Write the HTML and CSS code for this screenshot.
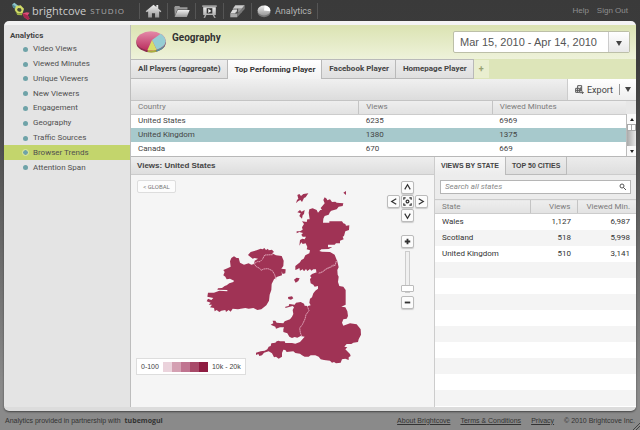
FILE: index.html
```html
<!DOCTYPE html>
<html lang="en">
<head>
<meta charset="utf-8">
<title>Brightcove Studio - Analytics</title>
<link rel="stylesheet" href="styles.css">
</head>
<body>
<header class="topbar">
  <a class="brand" href="#">
    <svg class="brand-mark" viewBox="0 0 60 54" aria-hidden="true">
      <path fill="#8cc4cc" d="M4 7l6-5 10 8 3 8-8 4-9-6z"/>
      <path fill="#548c97" d="M4 7l10 6 1 9-9-6z"/>
      <path fill="#d2dc68" d="M15 12l14-2 10 10-4 13-15 2-9-11z"/>
      <path fill="#454b38" d="M21 18l8 1 3 6-4 5-7-2-3-5z"/>
      <path fill="#9fb544" d="M11 24l9 11 15-2-2 7-14-1z"/>
      <path fill="#e04c78" d="M35 34l12-3 9 1-6 8 6 10-6 3-11-8z"/>
      <path fill="#a72850" d="M35 34l15 6 6 10-6 3-11-8z"/>
    </svg>
    <span class="brand-name">brightcove</span><span class="brand-sub">STUDIO</span>
  </a>
  <nav class="modules" aria-label="Modules">
    <a href="#" aria-label="Home"><svg viewBox="0 0 54 48"><path fill="url(#metal)" d="M2 25L27 4l9 7V5h6v11l10 9-3 3-4-3v20H32V31H22v14H10V25l-4 3z"/></svg></a>
    <a href="#" aria-label="Media"><svg viewBox="0 0 54 48"><path fill="#999" d="M4 12l3-4h13l3 4h23v7H14L6 40z"/><path fill="url(#metal)" d="M15 21h38l-9 22H5z"/></svg></a>
    <a href="#" aria-label="Publishing"><svg viewBox="0 0 54 48"><path fill="#aaa" d="M4 6h46v5H4z"/><path fill="url(#metal)" d="M7 12h40v25H7zM12 37h5l-4 9H8zM37 37h5l5 9h-5z"/><path fill="#333" d="M18 15h18v17H18z"/><path fill="#eee" d="M23 17l10 7-10 6z"/></svg></a>
    <a href="#" aria-label="Advertising"><svg viewBox="0 0 54 48"><path fill="#ccc" d="M20 6h30l-9 11H12z"/><path fill="#999" d="M12 17h29v11H12z"/><path fill="#777" d="M50 6v12L26 44V32l15-15z"/><path fill="#ddd" d="M11 21h15l-7 11H4z"/><path fill="#aaa" d="M4 32h22v12H4z"/><path fill="#444" d="M26 17h3v11h-3z"/></svg></a>
    <a class="current" href="#"><svg viewBox="0 0 48 48"><ellipse cx="24" cy="28" rx="22" ry="17" fill="#777"/><ellipse cx="24" cy="22" rx="22" ry="17" fill="url(#metal)"/><path fill="#fff" d="M24 22L26 5a22 17 0 0 1 19 20z"/></svg><span>Analytics</span></a>
  </nav>
  <nav class="account" aria-label="Account"><a href="#">Help</a><a href="#">Sign Out</a></nav>
</header>

<svg class="defs" aria-hidden="true"><defs>
  <linearGradient id="metal" x2="0" y2="1"><stop stop-color="#eee"/><stop offset="1" stop-color="#999"/></linearGradient>
  <linearGradient id="rose" x2="0" y2="1"><stop stop-color="#e48aa9"/><stop offset="1" stop-color="#b92c5c"/></linearGradient>
</defs></svg>

<div class="window">
  <aside class="sidebar">
    <h2>Analytics</h2>
    <ul>
      <li><a href="#">Video Views</a></li>
      <li><a href="#">Viewed Minutes</a></li>
      <li><a href="#">Unique Viewers</a></li>
      <li><a href="#">New Viewers</a></li>
      <li><a href="#">Engagement</a></li>
      <li><a href="#">Geography</a></li>
      <li><a href="#">Traffic Sources</a></li>
      <li class="selected"><a href="#">Browser Trends</a></li>
      <li><a href="#">Attention Span</a></li>
    </ul>
  </aside>

  <main class="content">
    <div class="banner">
      <svg class="pie" viewBox="0 0 90 66" aria-hidden="true">
        <ellipse cx="45" cy="35" rx="44" ry="29" fill="#8d2b51"/>
        <path fill="#56939c" d="M48 32L89 33Q88 54 62 62z"/>
        <path fill="#a7b03c" d="M48 34L62 62Q48 66 34 63z"/>
        <ellipse cx="45" cy="30" rx="44" ry="29" fill="url(#rose)"/>
        <path fill="#95cdd3" d="M48 27L74 8Q89 18 89 31 88 48 62 56z"/>
        <path fill="#d8de6b" d="M48 27L62 56Q48 60 34 58z"/>
      </svg>
      <h1>Geography</h1>
      <div class="date-picker">
        <span>Mar 15, 2010 - Apr 14, 2010</span>
        <button type="button" aria-label="Choose dates"><i class="caret"></i></button>
      </div>
    </div>

    <div class="player-tabs">
      <button type="button">All Players (aggregate)</button>
      <button type="button" class="active">Top Performing Player</button>
      <button type="button">Facebook Player</button>
      <button type="button">Homepage Player</button>
      <button type="button" class="add" aria-label="Add player">+</button>
    </div>

    <div class="toolbar">
      <button type="button" class="export">
        <svg viewBox="0 0 27 27" aria-hidden="true"><path fill="none" stroke="#555" stroke-width="3" d="M8 9V2h12v17M2 10h12v12H2zM2 16h12M8 10v12M17 7v12M14 23h11M21 19l4 4-4 3"/></svg>
        <span>Export</span>
      </button>
      <button type="button" class="more" aria-label="Export options"><i class="caret"></i></button>
    </div>

    <div class="countries">
      <table>
        <thead><tr><th class="c-country">Country</th><th class="c-views">Views</th><th>Viewed Minutes</th></tr></thead>
        <tbody>
          <tr><td>United States</td><td>6235</td><td>6969</td></tr>
          <tr class="selected"><td>United Kingdom</td><td>1380</td><td>1375</td></tr>
          <tr><td>Canada</td><td>670</td><td>669</td></tr>
        </tbody>
      </table>
      <div class="scroller">
        <button type="button" aria-label="Scroll up"><i class="caret up"></i></button>
        <div class="track"><i class="thumb"></i></div>
        <button type="button" aria-label="Scroll down"><i class="caret"></i></button>
      </div>
    </div>

    <div class="detail">
      <section class="map-panel">
        <h2>Views: United States</h2>
        <div class="map">
          <svg class="land" viewBox="0 0 540 570" role="img" aria-label="Map of the United Kingdom and Ireland">
            <g fill="#a03355">
              <path d="M288 70l3-10 4-4-3-11 6-3 5 6 7-6 15-2-8 12-5 2-6 12-5-6-7 4zM292 97l8-7 5 5 9-5-2 12-4 4-2 10-8-8 4-8zM430 38l8-5v12zM282 299l8-6 9 2-4 8-8 5zM264 351l12-2 4 6-7 4-8-2z"/>
              <path d="M370 60L374 52 380 56 382 61 390 58 396 66 406 65 410 68 430 70 428 78 416 80 410 88 394 92 390 96 386 104 374 108 370 116 369 128 388 128 388 124 426 124 430 130 436 132 438 137 448 136 447 150 436 154 432 168 428 170 431 178 420 182 420 190 408 190 404 194 384 194 384 202 397 201 386 207 364 208 358 213 366 215 390 216 404 224 411 242 402 258 380 268 362 280 354 282 349 276 348 268 340 268 334 272 330 267 322 273 318 267 312 274 308 268 300 272 298 264 292 268 286 270 286 258 300 247 304 240 311 236 316 226 328 220 330 211 320 208 322 201 317 190 308 192 304 187 298 197 300 180 307 176 314 178 318 170 308 170 304 164 309 159 298 156 290 160 290 154 300 154 308 149 306 142 312 132 306 124 320 126 322 118 329 118 326 98 328 88 338 85 350 90 354 98 361 90 366 90 362 84 374 70z"/>
              <path d="M411 240L416 262 412 270 413 284 416 290 414 306 418 318 430 320 437 330 437 374 424 380 436 382 442 394 444 408 440 416 430 418 426 428 430 437 450 430 470 433 482 448 483 464 476 478 474 486 460 488 454 492 440 492 433 500 442 502 436 508 450 522 452 528 446 532 446 540 436 536 426 538 422 548 408 550 402 546 396 548 390 542 372 540 362 538 356 530 346 526 332 526 326 530 314 530 306 526 300 521 286 519 280 514 260 516 256 510 250 509 246 519 246 530 236 536 228 530 222 532 216 520 206 514 192 518 186 526 178 528 175 522 168 525 168 518 182 514 194 512 202 508 206 500 212 498 214 490 226 488 230 484 236 482 240 484 254 484 256 489 276 489 286 491 300 486 308 477 314 470 302 468 292 473 284 471 276 474 268 470 262 460 250 456 250 448 252 442 240 442 228 446 226 440 212 434 220 430 218 422 226 422 230 428 250 430 254 424 270 418 276 410 280 402 278 390 282 382 278 378 256 384 256 380 266 378 268 372 284 374 288 368 302 366 312 371 314 377 324 378 332 376 328 368 330 356 336 352 340 340 346 332 354 326 354 318 344 320 340 314 332 310 330 298 334 292 330 288 336 282 350 277 362 280 380 268 402 258z"/>
              <path d="M144 225L152 216 170 211 182 206 188 208 193 204 198 210 204 206 206 211 216 209 222 216 216 220 228 226 245 228 251 242 250 258 244 266 257 268 256 280 248 282 245 274 246 286 232 290 222 298 215 312 214 330 209 344 207 362 199 376 184 388 172 390 160 384 146 386 136 384 122 386 114 388 98 386 92 395 86 390 78 396 76 390 64 392 58 396 50 390 44 394 42 384 30 382 36 374 26 374 32 368 20 364 24 356 34 360 40 354 22 350 24 338 42 338 58 332 82 334 82 330 52 329 54 325 66 324 74 318 80 316 88 310 100 306 102 302 90 296 80 298 76 290 70 286 74 276 70 270 84 264 92 260 90 244 94 234 102 229 110 234 116 234 120 248 132 254 146 250 154 254 162 252 164 242 174 236 164 234 158 236z"/>
            </g>
            <g fill="none" stroke="#dc9eb3" stroke-width="3" stroke-dasharray="5 1">
              <path d="M218 224l-24 1-6 12-8 8-8 0-10 6 7 9 10 5 4 6 8-4 13-1 13 6 7 12 4 14"/>
              <path d="M409 243l-4 14-6-2-8 6-12 5-11 9-13 5M322 378l5 14-9 12-3 13-8 17-8 10 2 14 4 11"/>
            </g>
          </svg>
          <button type="button" class="map-button global">&lt; GLOBAL</button>
          <div class="map-controls">
            <div class="pan">
              <button type="button" class="map-button n" aria-label="Pan up"><svg viewBox="0 0 12 12"><path d="M3 8l3-5 3 5"/></svg></button>
              <button type="button" class="map-button w" aria-label="Pan left"><svg viewBox="0 0 12 12"><path d="M9 3L4 6l5 3"/></svg></button>
              <button type="button" class="map-button m" aria-label="Fit"><svg viewBox="0 0 12 12"><path d="M2 4V2h2M8 2h2v2M10 8v2H8M4 10H2V8"/><circle cx="6" cy="6" r="1.5"/></svg></button>
              <button type="button" class="map-button e" aria-label="Pan right"><svg viewBox="0 0 12 12"><path d="M3 3l5 3-5 3"/></svg></button>
              <button type="button" class="map-button s" aria-label="Pan down"><svg viewBox="0 0 12 12"><path d="M3 4l3 5 3-5"/></svg></button>
            </div>
            <button type="button" class="map-button zoom" aria-label="Zoom in"><svg viewBox="0 0 12 12"><path d="M3 6h6M6 3v6"/></svg></button>
            <input class="zoom-level" type="range" min="0" max="10" value="0" aria-label="Zoom level">
            <button type="button" class="map-button zoom" aria-label="Zoom out"><svg viewBox="0 0 12 12"><path d="M3 6h6"/></svg></button>
          </div>
          <div class="legend"><span>0-100</span><div class="ramp"><i></i><i></i><i></i><i></i><i></i></div><span>10k - 20k</span></div>
        </div>
      </section>

      <section class="states">
        <div class="state-tabs">
          <button type="button" class="active">VIEWS BY STATE</button>
          <button type="button">TOP 50 CITIES</button>
        </div>
        <div class="search">
          <input type="text" placeholder="Search all states" aria-label="Search all states">
          <svg viewBox="0 0 24 24" aria-hidden="true"><circle cx="9" cy="9" r="6"/><path d="M13 13l8 8"/></svg>
        </div>
        <table>
          <thead><tr><th>State</th><th class="s-views">Views</th><th class="s-min">Viewed Min.</th></tr></thead>
          <tbody>
            <tr><td>Wales</td><td>1,127</td><td>6,987</td></tr>
            <tr><td>Scotland</td><td>518</td><td>5,998</td></tr>
            <tr><td>United Kingdom</td><td>510</td><td>3,141</td></tr>
          </tbody>
        </table>
        <div class="stripes"></div>
      </section>
    </div>
  </main>
</div>

<footer class="footer">
  <span>Analytics provided in partnership with</span><b>tubemogul</b>
  <nav aria-label="Footer"><a href="#">About Brightcove</a><a href="#">Terms &amp; Conditions</a><a href="#">Privacy</a></nav>
  <span>© 2010 Brightcove Inc.</span>
  <svg class="grip" viewBox="0 0 8 8" aria-hidden="true"><path d="M1 8l7-7M4 8l4-4"/></svg>
</footer>
</body>
</html>
```
FILE: styles.css
```css
* { box-sizing: border-box; }

body {
  margin: 0;
  min-height: 100vh;
  display: flex;
  flex-direction: column;
  font: 8px/12px Roboto, "Liberation Sans", Arial, sans-serif;
  color: #444;
  background: linear-gradient(#3a3a3a 0, #3c3c3c 15%, #8a8a8a 90%);
}

a { color: inherit; text-decoration: none; }
h1, h2, ul { margin: 0; padding: 0; }
ul { list-style: none; }
button, input { font: inherit; color: inherit; margin: 0; padding: 0; border: 0; background: none; }
svg { display: block; }
.defs { position: absolute; width: 0; height: 0; }

.caret {
  display: inline-block;
  border: 3px solid transparent;
  border-top: 5px solid #444;
  border-bottom: 0;
}
.caret.up { border-top: 0; border-bottom: 3px solid #222; }

/* Top bar */
.topbar { display: flex; align-items: center; height: 21px; padding: 0 12px 0 11px; color: #b4b4b4; }
.brand { display: flex; align-items: center; width: 128px; }
.brand-mark { width: 20px; height: 18px; margin-right: 1px; }
.brand-name { font: 11px/20px "Open Sans", sans-serif; color: #ccc; }
.brand-sub { margin-left: 4px; font: 8px/20px "Open Sans", sans-serif; letter-spacing: 1px; color: #aaa; }
.modules { display: flex; }
.modules a { display: flex; align-items: center; gap: 4px; height: 16px; padding: 0 5px; border-left: 1px solid #555; }
.modules a:last-child { border-right: 1px solid #555; }
.modules svg { width: 17px; height: 16px; }
.modules .current svg { width: 14px; height: 14px; }
.current span { font-size: 9px; line-height: 16px; }
.account { display: flex; gap: 8px; margin-left: auto; color: #8f8f8f; font-family: "Liberation Sans", sans-serif; }

/* Window */
.window {
  flex: 1;
  display: flex;
  margin: 0 4px;
  border-top: 4px solid #f4f4f4;
  border-bottom: 4px solid #dcdcdc;
  border-radius: 5px;
  background: #e4e4e4;
  box-shadow: 0 1px 2px #444;
}
.sidebar { width: 127px; padding-top: 5px; border-right: 1px solid #bdbdbd; }
.sidebar h2 { margin-left: 6px; font-size: 8px; line-height: 12px; }
.sidebar ul { display: grid; grid-auto-rows: 1fr; height: 133px; }
.sidebar li { display: flex; align-items: center; padding-left: 19px; color: #505050; }
.sidebar li::before {
  content: "";
  width: 5px;
  height: 5px;
  margin-right: 5px;
  border-radius: 50%;
  background: #6fa3a8;
}
.sidebar .selected { background: #c3d56c; }
.sidebar .selected::before { outline: 1px solid #dce8a8; }
.content { flex: 1; display: flex; flex-direction: column; min-width: 0; }

/* Banner */
.banner { display: flex; align-items: center; height: 34px; padding: 0 6px 0 5px; background: linear-gradient(#dbe3b2, #eef2da); }
.pie { width: 30px; height: 22px; }
.banner h1 { margin: 0 auto 8px 6px; font-size: 10px; line-height: 12px; color: #333; }
.date-picker { display: flex; height: 22px; border: 1px solid #bcbfa8; border-radius: 2px; background: #fff; font: 11px/20px "Liberation Sans", sans-serif; color: #555; }
.date-picker span { width: 154px; padding-left: 6px; }
.date-picker button { width: 21px; border-left: 1px solid #ccc; background: linear-gradient(#fff, #e8e8e8); }

/* Player tabs */
.player-tabs { display: flex; height: 20px; background: #dde5b9; }
.player-tabs button {
  padding: 0 6px 0 7px;
  border: solid #b9b9b9;
  border-width: 1px 1px 1px 0;
  background: linear-gradient(#ededed, #dfdfdf);
  font-weight: bold;
}
.player-tabs .active { border-bottom: 0; background: linear-gradient(#fff, #f2f2f2); color: #333; }
.player-tabs .add { padding: 0 5px; border-color: #dde5b9; background: #e9eecf; color: #98a273; font-size: 9px; }

.toolbar { display: flex; justify-content: flex-end; height: 22px; background: linear-gradient(#f0f0f0, #dcdcdc); border-bottom: 1px solid #c4c4c4; }
.toolbar button { background: linear-gradient(#fff, #eee); }
.toolbar .export { display: flex; align-items: center; gap: 3px; width: 52px; padding-left: 7px; border-left: 1px solid #ccc; font-size: 9px; }
.export svg { width: 9px; height: 9px; }
.more { width: 17px; position: relative; }
.more::before { content: ""; position: absolute; left: 0; top: 5px; bottom: 5px; border-left: 1px solid #999; }

/* Tables */
table { width: 100%; border-collapse: collapse; table-layout: fixed; }
th { font-weight: normal; text-align: left; color: #7c7c7c; background: linear-gradient(#eee, #e2e2e2); border-bottom: 1px solid #ccc; }
th + th { border-left: 1px solid #c4c4c4; }
th, td { padding: 0 7px; }

.countries { position: relative; padding-right: 10px; background: #e8e8e8; }
.countries th { height: 13px; line-height: 12px; }
.countries td { height: 14px; background: #fff; }
.countries .selected td { background: #a7c9cc; }
.c-country { width: 46%; }
.c-views { width: 27%; }
.scroller { position: absolute; right: 0; top: 13px; bottom: 0; width: 10px; display: flex; flex-direction: column; border-left: 1px solid #bbb; background: #ddd; }
.scroller button { display: flex; align-items: center; justify-content: center; height: 10px; background: #fafafa; }
.scroller .caret { border-width: 3px 2px 0; border-top-color: #222; }
.scroller .caret.up { border-width: 0 2px 3px; }
.track { flex: 1; background: linear-gradient(90deg, #aaa, #e8e8e8); }
.thumb { display: block; height: 7px; border: 1px solid #aaa; background: linear-gradient(90deg, #fff 40%, #aaa, #fff 60%); }

.detail { flex: 1; display: flex; border-top: 1px solid #b8b8b8; }

/* Map */
.map-panel { flex: 1; display: flex; flex-direction: column; }
.map-panel h2 { height: 18px; padding-left: 6px; font: bold 8px/17px "Liberation Sans", sans-serif; background: linear-gradient(#eee, #dedede); border-bottom: 1px solid #ccc; }
.map { position: relative; flex: 1; background: #f5f5f5; }
.land { position: absolute; left: 69px; top: 5px; width: 180px; height: 190px; }
.map-button { display: grid; place-items: center; width: 13px; height: 13px; border: 1px solid #bbb; border-radius: 2px; background: #fcfcfc; box-shadow: 0 1px 1px #ccc; }
.map-button svg { width: 11px; height: 11px; fill: none; stroke: #333; stroke-width: 1.3; }
.map .global { position: absolute; left: 6px; top: 5px; width: 39px; border-color: #ddd; box-shadow: none; font-size: 6px; line-height: 10px; color: #777; }
.map-controls { position: absolute; right: 6px; top: 6px; display: flex; flex-direction: column; align-items: center; }
.pan { display: grid; grid-template-columns: repeat(3, 13px); gap: 1px; margin-bottom: 13px; }
.n { grid-area: 1 / 2; }
.w { grid-area: 2 / 1; }
.m { grid-area: 2 / 2; }
.e { grid-area: 2 / 3; }
.s { grid-area: 3 / 2; }
.zoom svg { stroke-width: 2; }
.zoom-level { writing-mode: vertical-lr; direction: rtl; appearance: none; width: 13px; height: 42px; margin: 3px 0; }
.zoom-level::-webkit-slider-runnable-track { width: 5px; height: 42px; border: 1px solid #ccc; background: #f0f0f0; }
.zoom-level::-webkit-slider-thumb { appearance: none; width: 13px; height: 7px; margin-left: -5px; border: 1px solid #bbb; border-radius: 1px; background: #fff; }
.legend { position: absolute; left: 5px; bottom: 32px; display: flex; align-items: center; gap: 4px; height: 17px; padding: 0 4px; border: 1px solid #ddd; background: #fff; font: 7px/12px "Liberation Sans", sans-serif; }
.ramp { display: flex; }
.ramp i { width: 9px; height: 10px; background: #ebd3dc; }
.ramp i:nth-child(2) { background: #d4a0b2; }
.ramp i:nth-child(3) { background: #c07490; }
.ramp i:nth-child(4) { background: #a84a69; }
.ramp i:nth-child(5) { background: #8f1d42; }

/* States */
.states { width: 202px; display: flex; flex-direction: column; border-left: 1px solid #ccc; background: #ececec; }
.state-tabs { display: flex; height: 18px; background: linear-gradient(#ececec, #dedede); border-bottom: 1px solid #ccc; }
.state-tabs button { height: 18px; padding: 0 6px; border-right: 1px solid #bbb; border-bottom: 1px solid #bbb; font: bold 7px/12px "Liberation Sans", sans-serif; }
.state-tabs .active { background: linear-gradient(#f8f8f8, #ececec); border-bottom: 0; }
.search { display: flex; align-items: center; height: 14px; margin: 5px 5px; padding: 0 3px 0 4px; border: 1px solid #b5b5b5; background: #fff; }
.search input { flex: 1; min-width: 0; height: 12px; font-style: italic; outline: 0; }
.search input::placeholder { color: #888; }
.search svg { width: 8px; height: 8px; fill: none; stroke: #555; stroke-width: 3; }
.states th { height: 14px; border-top: 1px solid #ccc; }
.states td { height: 16px; background: #fff; color: #333; }
.states tr:nth-child(even) td { background: #f4f4f4; }
.states th + th, .states td + td { text-align: right; padding-right: 6px; }
.states th + th { padding-left: 0; }
.s-views { width: 47px; }
.s-min { width: 59px; }
.stripes { flex: 1; background: repeating-linear-gradient(#f4f4f4 0 16px, #fff 16px 32px); }

/* Footer */
.footer { display: flex; align-items: center; height: 19px; padding: 0 5px; font: 7px/12px "Liberation Sans", sans-serif; color: #333; }
.footer b { margin-left: 4px; font: bold 7px/12px "Open Sans", sans-serif; }
.footer nav { display: flex; gap: 10px; margin: 0 10px 0 auto; }
.footer nav a { text-decoration: underline; }
.grip { position: absolute; right: 0; bottom: 0; width: 8px; height: 8px; fill: none; stroke: #444; }
```
